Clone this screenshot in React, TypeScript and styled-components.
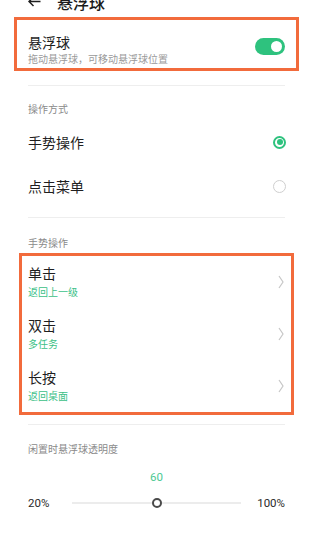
import React from "react";
import styled, { createGlobalStyle } from "styled-components";

const GlobalStyle = createGlobalStyle`
  html, body { margin: 0; padding: 0; background: #ffffff; }
  body { font-family: "Noto Sans CJK SC", "Noto Sans", sans-serif; color: #1f1f1f; }
  * { box-sizing: border-box; }
`;

const ORANGE = "#f26b3c";
const GREEN = "#2ec27e";

const Page = styled.div`
  width: 312px;
  margin-top: -14px;
  display: flex;
  flex-direction: column;
  overflow: hidden;
`;

const Header = styled.div`
  height: 31px;
  display: flex;
  align-items: center;
  padding-left: 28px;
`;

const HeaderTitle = styled.div`
  margin-left: 16px;
  font-size: 16px;
  font-weight: 500;
  line-height: 20px;
  color: #1a1a1a;
`;

const Highlight = styled.div<{ $mx: number; $pl: number; $pr: number }>`
  margin: 0 ${(p) => p.$mx - 1}px 0 ${(p) => p.$mx}px;
  border: 3px solid ${ORANGE};
  padding: 0 ${(p) => p.$pr}px 0 ${(p) => p.$pl}px;
  display: flex;
  flex-direction: column;
`;

const SwitchRow = styled.div`
  display: flex;
  align-items: flex-start;
  justify-content: space-between;
  padding: 13px 0 2px;
`;

const TextCol = styled.div`
  display: flex;
  flex-direction: column;
`;

const MainText = styled.div`
  font-size: 14px;
  line-height: 19px;
  color: #1f1f1f;
`;

const SubText = styled.div<{ $green?: boolean }>`
  font-size: 10px;
  line-height: 14px;
  color: ${(p) => (p.$green ? "#3cbf87" : "#9a9a9a")};
`;

const Toggle = styled.div`
  margin-top: 5px;
  width: 30px;
  height: 17px;
  border-radius: 9px;
  background: ${GREEN};
  display: flex;
  align-items: center;
  justify-content: flex-end;
  padding-right: 3px;
`;

const Knob = styled.div`
  width: 11px;
  height: 11px;
  border-radius: 50%;
  background: #ffffff;
`;

const Divider = styled.div<{ $mt: number }>`
  margin: ${(p) => p.$mt}px 27px 0 28px;
  height: 1px;
  background: #eeeeee;
`;

const SectionLabel = styled.div<{ $mt: number }>`
  margin-top: ${(p) => p.$mt}px;
  padding-left: 28px;
  font-size: 10px;
  line-height: 14px;
  color: #8a8a8a;
`;

const RadioList = styled.div`
  margin-top: 4px;
  display: flex;
  flex-direction: column;
`;

const RadioRow = styled.div`
  height: 44px;
  display: flex;
  align-items: center;
  justify-content: space-between;
  padding: 0 26px 0 28px;
`;

const Radio = styled.div<{ $on: boolean }>`
  width: 13px;
  height: 13px;
  border-radius: 50%;
  border: ${(p) => (p.$on ? `2px solid ${GREEN}` : "1.2px solid #cfcfcf")};
  display: flex;
  align-items: center;
  justify-content: center;
  &::after {
    content: "";
    display: ${(p) => (p.$on ? "block" : "none")};
    width: 6px;
    height: 6px;
    border-radius: 50%;
    background: ${GREEN};
  }
`;

const NavItem = styled.div`
  height: 52px;
  display: flex;
  align-items: center;
  justify-content: space-between;
`;

const NavText = styled.div`
  display: flex;
  flex-direction: column;
  align-self: flex-start;
  padding-top: 8px;
  & > div + div { margin-top: 2px; }
`;

const Chevron = () => (
  <svg width="6" height="14" viewBox="0 0 6 14">
    <path d="M1 1 L5 7 L1 13" fill="none" stroke="#c6c6c6" strokeWidth="1.2" />
  </svg>
);

const BackArrow = () => (
  <svg width="13" height="11" viewBox="0 0 13 11">
    <path d="M12.5 5.5 H1 M5.5 1 L1 5.5 L5.5 10" fill="none" stroke="#1f1f1f" strokeWidth="1.5" />
  </svg>
);

const SliderGrid = styled.div<{ $mt: number }>`
  margin-top: ${(p) => p.$mt}px;
  padding: 0 27px 0 28px;
  display: grid;
  grid-template-columns: 44px 1fr 44px;
  align-items: center;
  height: 14px;
`;

const RangeLabel = styled.div<{ $right?: boolean }>`
  font-family: Roboto, "Noto Sans", sans-serif;
  font-size: 11.5px;
  line-height: 14px;
  color: #2a2a2a;
  text-align: ${(p) => (p.$right ? "right" : "left")};
`;

const ValueCell = styled.div`
  position: relative;
  height: 14px;
`;

const ValueText = styled.div`
  position: absolute;
  top: 0;
  transform: translateX(-50%);
  font-family: Roboto, "Noto Sans", sans-serif;
  font-size: 11.5px;
  line-height: 14px;
  color: #4cc993;
`;

const Track = styled.div`
  position: relative;
  height: 2px;
  background: #ececec;
`;

const Thumb = styled.div`
  position: absolute;
  top: 50%;
  width: 10px;
  height: 10px;
  border-radius: 50%;
  border: 2px solid #4a4a4a;
  background: #ffffff;
  transform: translate(-50%, -50%);
`;

const gestures = [
  { title: "单击", sub: "返回上一级" },
  { title: "双击", sub: "多任务" },
  { title: "长按", sub: "返回桌面" },
];

export default function App() {
  const min = 20;
  const max = 100;
  const value = 60;
  const pct = ((value - min) / (max - min)) * 100;
  return (
    <>
      <GlobalStyle />
      <Page>
        <Header>
          <BackArrow />
          <HeaderTitle>悬浮球</HeaderTitle>
        </Header>

        <Highlight $mx={14} $pl={11} $pr={11}>
          <SwitchRow>
            <TextCol>
              <MainText>悬浮球</MainText>
              <SubText>拖动悬浮球，可移动悬浮球位置</SubText>
            </TextCol>
            <Toggle>
              <Knob />
            </Toggle>
          </SwitchRow>
        </Highlight>

        <Divider $mt={14} />
        <SectionLabel $mt={16}>操作方式</SectionLabel>
        <RadioList>
          <RadioRow>
            <MainText>手势操作</MainText>
            <Radio $on />
          </RadioRow>
          <RadioRow>
            <MainText>点击菜单</MainText>
            <Radio $on={false} />
          </RadioRow>
        </RadioList>

        <Divider $mt={9} />
        <SectionLabel $mt={18}>手势操作</SectionLabel>
        <Highlight $mx={19} $pl={6} $pr={7} style={{ marginTop: 3 }}>
          {gestures.map((g) => (
            <NavItem key={g.title}>
              <NavText>
                <MainText>{g.title}</MainText>
                <SubText $green>{g.sub}</SubText>
              </NavText>
              <Chevron />
            </NavItem>
          ))}
        </Highlight>

        <Divider $mt={9} />
        <SectionLabel $mt={17}>闲置时悬浮球透明度</SectionLabel>
        <SliderGrid $mt={14}>
          <span />
          <ValueCell>
            <ValueText style={{ left: `${pct}%` }}>{value}</ValueText>
          </ValueCell>
          <span />
        </SliderGrid>
        <SliderGrid $mt={12}>
          <RangeLabel>20%</RangeLabel>
          <Track>
            <Thumb style={{ left: `${pct}%` }} />
          </Track>
          <RangeLabel $right>100%</RangeLabel>
        </SliderGrid>
      </Page>
    </>
  );
}
